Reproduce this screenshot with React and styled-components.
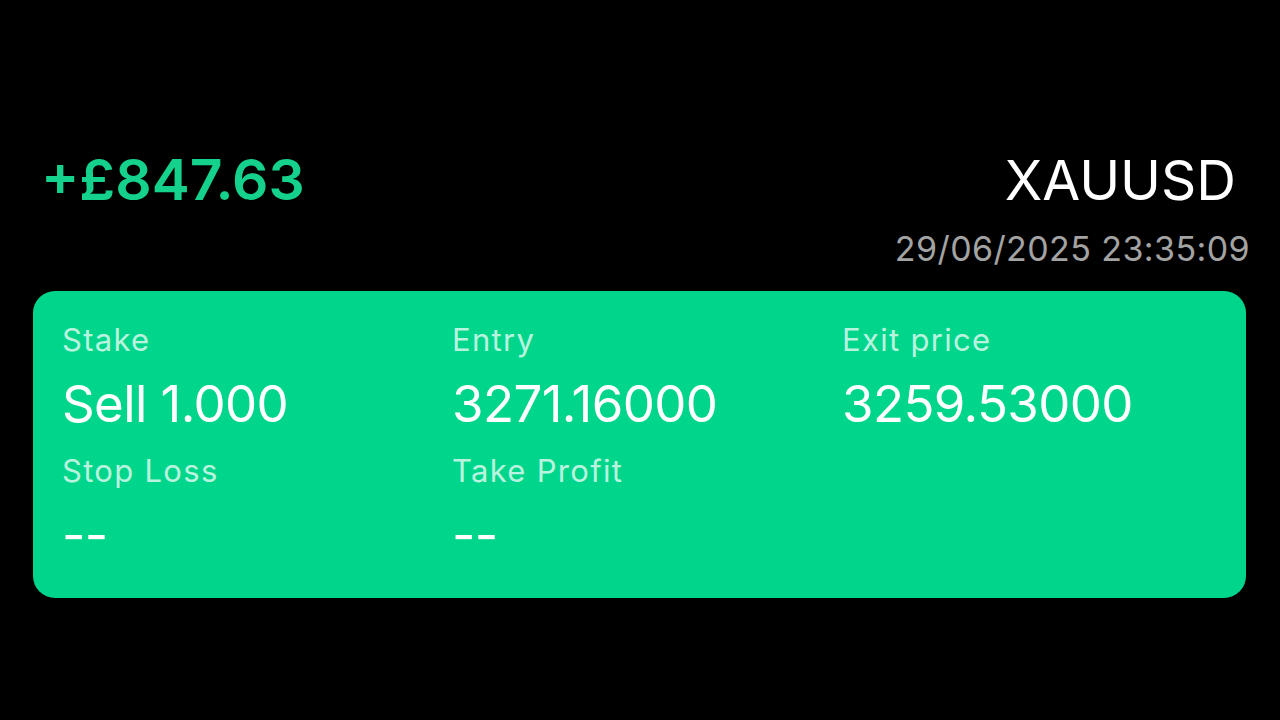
import React from "react";
import styled, { createGlobalStyle } from "styled-components";

const GlobalStyle = createGlobalStyle`
  html, body {
    margin: 0;
    padding: 0;
    background: #000;
  }
  body {
    font-family: "Inter", "Liberation Sans", Arial, sans-serif;
    color: #fff;
  }
`;

const Page = styled.div`
  width: 1280px;
  height: 720px;
  background: #000;
  box-sizing: border-box;
  padding: 148px 34px 0 33px;
`;

const Header = styled.div`
  display: flex;
  justify-content: space-between;
  align-items: flex-start;
  padding-left: 8px;
  margin-right: -4px;
`;

const Profit = styled.div`
  font-size: 57px;
  font-weight: 600;
  line-height: 64px;
  color: #14d18b;
`;

const Meta = styled.div`
  display: flex;
  flex-direction: column;
  align-items: flex-end;
`;

const Symbol = styled.div`
  font-size: 55px;
  line-height: 64px;
  margin-right: 14px;
  margin-bottom: 15px;
`;

const Stamp = styled.div`
  font-size: 34px;
  line-height: 44px;
  letter-spacing: 0.4px;
  color: #a3a3a3;
`;

const Card = styled.div`
  margin-top: 20px;
  background: #00d68b;
  border-radius: 22px;
  padding: 29px 29px 33px;
  display: grid;
  grid-template-columns: repeat(3, 390px);
  row-gap: 17px;
`;

const Cell = styled.div`
  display: flex;
  flex-direction: column;
  gap: 14px;
`;

const Label = styled.div`
  font-size: 31px;
  line-height: 40px;
  letter-spacing: 1.3px;
  color: rgba(255, 255, 255, 0.74);
`;

const Value = styled.div`
  font-size: 51px;
  line-height: 60px;
  letter-spacing: -0.6px;
  color: #fff;
`;

const fields = [
  { label: "Stake", value: "Sell 1.000" },
  { label: "Entry", value: "3271.16000" },
  { label: "Exit price", value: "3259.53000" },
  { label: "Stop Loss", value: "--" },
  { label: "Take Profit", value: "--" },
];

export default function App() {
  return (
    <>
      <GlobalStyle />
      <Page>
        <Header>
          <Profit>+£847.63</Profit>
          <Meta>
            <Symbol>XAUUSD</Symbol>
            <Stamp>29/06/2025 23:35:09</Stamp>
          </Meta>
        </Header>
        <Card>
          {fields.map((f) => (
            <Cell key={f.label}>
              <Label>{f.label}</Label>
              <Value>{f.value}</Value>
            </Cell>
          ))}
        </Card>
      </Page>
    </>
  );
}
